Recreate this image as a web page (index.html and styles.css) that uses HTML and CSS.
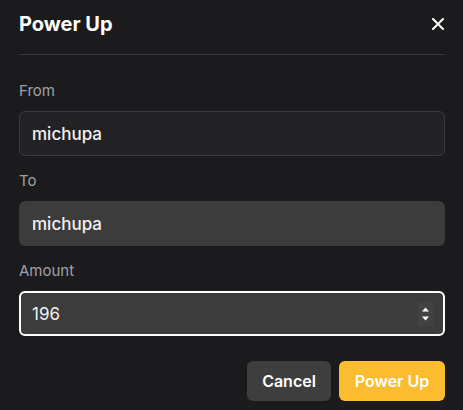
FILE: index.html
```html
<!DOCTYPE html>
<html>
<head>
<meta charset="utf-8">
<link rel="stylesheet" href="styles.css">
</head>
<body>
<div class="dialog">
  <div class="header">
    <h1 class="title">Power Up</h1>
    <button class="close" aria-label="Close">
      <svg width="12" height="12" viewBox="0 0 12 12"><path d="M1 1L11 11M11 1L1 11" stroke="#fff" stroke-width="2" stroke-linecap="round"/></svg>
    </button>
  </div>
  <div class="divider"></div>
  <div class="form">
    <div class="field">
      <div class="label">From</div>
      <div class="input input-outline">michupa</div>
    </div>
    <div class="field">
      <div class="label">To</div>
      <div class="input input-filled">michupa</div>
    </div>
    <div class="field">
      <div class="label">Amount</div>
      <div class="input input-filled input-focus">
        <span class="value">196</span>
        <span class="spinner">
          <svg width="9" height="16" viewBox="0 0 9 16"><path d="M4.5 1.5L8 5.5H1Z" fill="#fff"/><path d="M1 10.5H8L4.5 14.5Z" fill="#fff"/></svg>
        </span>
      </div>
    </div>
  </div>
  <div class="actions">
    <button class="btn btn-cancel">Cancel</button>
    <button class="btn btn-primary">Power Up</button>
  </div>
</div>
</body>
</html>
```

FILE: styles.css
```css
html, body {
  margin: 0;
  padding: 0;
  background: #1b1b1d;
  font-family: Inter, "Noto Sans", "Liberation Sans", sans-serif;
}
.dialog {
  width: 463px;
  height: 410px;
  box-sizing: border-box;
  padding: 14px 18px 0 19px;
  color: #fff;
}
.header {
  display: flex;
  align-items: center;
  justify-content: space-between;
  height: 20px;
}
.title {
  margin: 0;
  font-size: 20px;
  font-weight: 700;
  line-height: 20px;
  color: #fff;
}
.close {
  background: none;
  border: 0;
  padding: 0;
  margin-right: 1px;
  width: 12px;
  height: 12px;
  display: flex;
  cursor: pointer;
}
.divider {
  margin-top: 20px;
  height: 1px;
  background: #38383a;
}
.form {
  margin-top: 26px;
  display: flex;
  flex-direction: column;
  gap: 15px;
}
.label {
  font-size: 15px;
  line-height: 20px;
  color: #a1a1a5;
  margin-bottom: 10px;
}
.input {
  height: 45px;
  box-sizing: border-box;
  border-radius: 6px;
  padding: 0 12px 0 13px;
  display: flex;
  align-items: center;
  font-size: 17px;
  font-weight: 500;
  color: #f2f2f2;
}
.input-outline {
  background: #222224;
  border: 1px solid #3b3b3d;
  padding-left: 12px;
}
.input-filled {
  background: #3c3c3c;
}
.input-focus {
  border: 2px solid #fff;
  padding-left: 11px;
  justify-content: space-between;
  padding-right: 10px;
  font-weight: 400;
}
.spinner {
  width: 15px;
  height: 24px;
  background: #424242;
  display: flex;
  align-items: center;
  justify-content: center;
}
.actions {
  margin-top: 25px;
  display: flex;
  justify-content: flex-end;
  gap: 8px;
}
.btn {
  height: 40px;
  border: 0;
  border-radius: 6px;
  font-family: inherit;
  font-size: 16px;
  font-weight: 600;
  color: #fff;
  cursor: pointer;
}
.btn-cancel {
  width: 84px;
  background: #3e3e3e;
}
.btn-primary {
  width: 106px;
  background: #fcbc2f;
}
```
